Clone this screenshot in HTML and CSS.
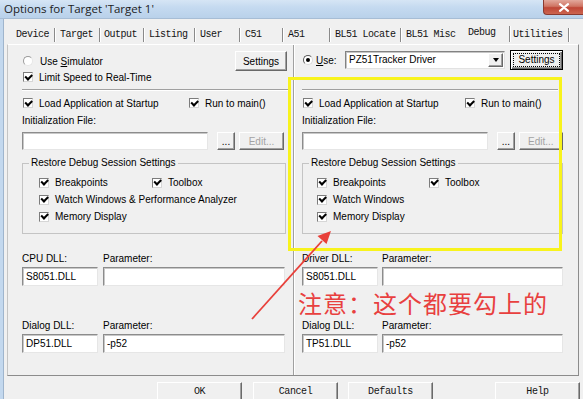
FILE: index.html
```html
<!DOCTYPE html>
<html lang="en">
<head>
<meta charset="utf-8">
<title>Options for Target 'Target 1'</title>
<link rel="stylesheet" href="styles.css">
</head>
<body>
<div class="window">
  <div class="titlebar">
    <span class="title">Options for Target 'Target 1'</span>
    <span class="close"><svg width="12" height="9" viewBox="0 0 12 9"><path d="M2 1.2 L10 7.8 M10 1.2 L2 7.8" stroke="#fff" stroke-width="2.2" stroke-linecap="round"/></svg></span>
  </div>
  <div class="frame">
    <div class="frame-edge"></div>
    <div class="client">
      <div class="tabstrip">
        <span class="tab">Device</span>
        <span class="tab">Target</span>
        <span class="tab">Output</span>
        <span class="tab">Listing</span>
        <span class="tab">User</span>
        <span class="tab">C51</span>
        <span class="tab">A51</span>
        <span class="tab">BL51 Locate</span>
        <span class="tab">BL51 Misc</span>
        <span class="tab active">Debug</span>
        <span class="tab">Utilities</span>
      </div>
      <div class="tabbody">
        <div class="col col-left">
          <div class="topsec">
            <div class="row-top">
              <span class="opt"><span class="radio"></span><span>Use <u>S</u>imulator</span></span>
              <button class="btn btn-settings">Settings</button>
            </div>
            <div class="row-check row-limit"><span class="check"></span>Limit Speed to Real-Time</div>
          </div>
          <div class="hsep"></div>
          <div class="row-check row-load">
            <span class="chk-item"><span class="check"></span>Load Application at Startup</span>
            <span class="chk-item"><span class="check"></span>Run to main()</span>
          </div>
          <div class="lbl lbl-init">Initialization File:</div>
          <div class="row-file">
            <span class="field field-init"></span>
            <button class="btn btn-dots">...</button>
            <button class="btn btn-edit">Edit...</button>
          </div>
          <fieldset class="group">
            <legend>Restore Debug Session Settings</legend>
            <div class="group-body">
              <div class="grow"><span class="chk-item"><span class="check"></span>Breakpoints</span><span class="chk-item"><span class="check"></span>Toolbox</span></div>
              <div class="grow"><span class="chk-item"><span class="check"></span>Watch Windows &amp; Performance Analyzer</span></div>
              <div class="grow"><span class="chk-item"><span class="check"></span>Memory Display</span></div>
            </div>
          </fieldset>
          <div class="dll dll-first">
            <span class="lbl">CPU DLL:</span><span class="lbl">Parameter:</span>
            <span class="field">S8051.DLL</span><span class="field"></span>
          </div>
          <div class="note-row"></div>
          <div class="dll">
            <span class="lbl">Dialog DLL:</span><span class="lbl">Parameter:</span>
            <span class="field">DP51.DLL</span><span class="field">-p52</span>
          </div>
        </div>
        <div class="vsep"></div>
        <div class="col col-right">
          <div class="topsec">
            <div class="row-top">
              <span class="radio radio-on"></span>
              <span class="use-lbl"><u>U</u>se:</span>
              <span class="combo"><span class="combo-text">PZ51Tracker Driver</span><span class="combo-btn"><span class="tri"></span></span></span>
              <button class="btn btn-settings btn-default"><span class="focus">Settings</span></button>
            </div>
          </div>
          <div class="hsep"></div>
          <div class="row-check row-load">
            <span class="chk-item"><span class="check"></span>Load Application at Startup</span>
            <span class="chk-item"><span class="check"></span>Run to main()</span>
          </div>
          <div class="lbl lbl-init">Initialization File:</div>
          <div class="row-file">
            <span class="field field-init"></span>
            <button class="btn btn-dots">...</button>
            <button class="btn btn-edit">Edit...</button>
          </div>
          <fieldset class="group">
            <legend>Restore Debug Session Settings</legend>
            <div class="group-body">
              <div class="grow"><span class="chk-item"><span class="check"></span>Breakpoints</span><span class="chk-item"><span class="check"></span>Toolbox</span></div>
              <div class="grow"><span class="chk-item"><span class="check"></span>Watch Windows</span></div>
              <div class="grow"><span class="chk-item"><span class="check"></span>Memory Display</span></div>
            </div>
          </fieldset>
          <div class="dll dll-first">
            <span class="lbl">Driver DLL:</span><span class="lbl">Parameter:</span>
            <span class="field">S8051.DLL</span><span class="field"></span>
          </div>
          <div class="note-row"><span class="note">注意：这个都要勾上的</span></div>
          <div class="dll">
            <span class="lbl">Dialog DLL:</span><span class="lbl">Parameter:</span>
            <span class="field">TP51.DLL</span><span class="field">-p52</span>
          </div>
        </div>
      </div>
      <div class="buttons">
        <span class="dbtn">OK</span>
        <span class="dbtn dbtn-cancel">Cancel</span>
        <span class="dbtn dbtn-defaults">Defaults</span>
        <span class="dbtn dbtn-help">Help</span>
      </div>
    </div>
  </div>
</div>
<div class="mark-box"></div>
<svg class="arrow" width="583" height="399" viewBox="0 0 583 399">
  <line x1="252" y1="319" x2="322" y2="241" stroke="#e8403a" stroke-width="1.8"/>
  <polygon points="331,231 326.5,244 317.5,236" fill="#e8403a"/>
</svg>
</body>
</html>
```
FILE: styles.css
```css
* { box-sizing: border-box; }
html, body { margin: 0; padding: 0; }
body {
  width: 583px; height: 399px; overflow: hidden; position: relative;
  background: #f0f0f0;
  font-family: "Liberation Sans", Arial, sans-serif; font-size: 10px; color: #000;
}
.window { display: flex; flex-direction: column; height: 399px; }

.titlebar {
  height: 19px; flex: none; display: flex; align-items: flex-start;
  background: linear-gradient(180deg, #d6e5f5 0%, #c5daf0 40%, #b9d1ea 100%);
  border-bottom: 1px solid #a7bdd5;
}
.title {
  font-family: "Open Sans", sans-serif; font-size: 11.5px; line-height: 16px;
  color: #1c1c1c; padding: 1px 0 0 4px;
}
.close {
  margin-left: auto; width: 40px; height: 15px; display: flex; align-items: center; justify-content: center;
  background: linear-gradient(180deg, #e2a89c 0%, #cf7463 45%, #bf4636 55%, #cc6550 100%);
  border: 1px solid #8a3a30; border-top: none; border-right: none; border-radius: 0 0 0 4px;
}

.frame { flex: 1; display: flex; min-height: 0; }
.frame-edge { width: 4px; flex: none; background: #c3d8ee; border-right: 1px solid #9fb5cd; }
.client { flex: 1; display: flex; flex-direction: column; min-width: 0; }

.tabstrip {
  height: 25px; flex: none; display: flex; align-items: flex-start; padding: 9px 0 0 6px;
  font-family: "Liberation Mono", monospace; font-size: 10px; letter-spacing: -0.5px; color: #141414;
}
.tab {
  height: 14px; line-height: 14px; padding-left: 5px; white-space: nowrap; flex: none;
  border-right: 1px solid #8a8a8a; box-shadow: 1px 0 0 #fff;
}
.tab:nth-child(1) { width: 45px; padding-left: 6px; }
.tab:nth-child(2) { width: 45px; }
.tab:nth-child(3) { width: 44px; padding-left: 4px; }
.tab:nth-child(4) { width: 51px; }
.tab:nth-child(5) { width: 45px; }
.tab:nth-child(6) { width: 43px; }
.tab:nth-child(7) { width: 47px; }
.tab:nth-child(8) { width: 71px; }
.tab:nth-child(9) { width: 59px; border-right: none; box-shadow: none; }
.tab:nth-child(10) { width: 50px; padding-left: 8px; }
.tab:nth-child(11) { width: 59px; padding-left: 3px; }
.tab.active { margin-top: -2px; height: 16px; }

.tabbody {
  margin-left: 3px; width: 572px; height: 332px; flex: none;
  border: 1px solid; border-color: #fff #8c8c8c #8c8c8c #c4c4c4;
  display: grid; grid-template-columns: 265px 15px 261px;
  padding: 0 15px 0 14px;
}
.vsep { margin-left: 6px; width: 2px; border-left: 1px solid #a0a0a0; border-right: 1px solid #fff; }

.col { display: flex; flex-direction: column; padding-top: 6px; min-width: 0; }
.topsec { height: 38px; flex: none; }
.row-top { height: 20px; display: flex; align-items: center; }
.col-right .row-top { margin-top: -1px; }
.opt { display: flex; align-items: center; white-space: nowrap; }
.row-check { height: 14px; display: flex; align-items: center; white-space: nowrap; flex: none; }
.row-limit { margin-top: -1px; }

.radio {
  width: 10px; height: 10px; flex: none; border-radius: 50%; background: #fff; position: relative;
  border: 1px solid; border-color: #9a9a9a #e6e6e6 #e6e6e6 #9a9a9a;
  margin: 0 7px 0 1px;
}
.radio-on { margin-right: 3px; border-color: #5a5a5a #dadada #dadada #5a5a5a; }
.radio-on::after {
  content: ""; position: absolute; left: 2px; top: 2px; width: 4px; height: 4px; border-radius: 50%; background: #000;
}
.use-lbl { width: 29px; flex: none; }

.check {
  width: 10px; height: 10px; flex: none; background: #fff; position: relative; display: inline-block;
  border: 1px solid; border-color: #7c7c7c #d6d6d6 #d6d6d6 #7c7c7c;
  margin: 0 6px 0 1px;
}
.check::after {
  content: ""; position: absolute; left: 1px; top: 0.5px; width: 5px; height: 2.5px;
  border-left: 2px solid #000; border-bottom: 2px solid #000; transform: rotate(-45deg);
}
.chk-item { display: flex; align-items: center; white-space: nowrap; }
.row-load { margin-top: 5px; }
.col-left .row-load .chk-item:first-child { width: 166px; }
.col-right .row-load .chk-item:first-child { width: 162px; }

.btn {
  background: #f0f0f0; padding: 0; margin: 0; height: 20px;
  font-family: "Liberation Sans", Arial, sans-serif; font-size: 10px; color: #000;
  border: 1px solid; border-color: #fff #696969 #696969 #fff;
  box-shadow: inset -1px -1px 0 #a0a0a0;
}
.btn-settings { width: 53px; margin-left: auto; }
.col-left .btn-settings { width: 52px; }
.btn-default {
  margin-left: 5px; border: 1px solid #000; padding: 2px;
  box-shadow: inset 1px 1px 0 #fff, inset -1px -1px 0 #696969, inset -2px -2px 0 #a0a0a0;
  display: flex;
}
.focus { flex: 1; border: 1px dotted #000; line-height: 12px; text-align: center; }

.combo {
  width: 160px; height: 18px; flex: none; display: flex; background: #fff;
  border: 1px solid; border-color: #828282 #e2e2e2 #e2e2e2 #828282;
  box-shadow: inset 1px 1px 0 #c6c6c6; padding: 1px;
}
.combo-text { flex: 1; padding-left: 2px; line-height: 14px; white-space: nowrap; }
.combo-btn {
  width: 15px; flex: none; background: #f0f0f0; display: flex; align-items: center; justify-content: center;
  border: 1px solid; border-color: #fff #696969 #696969 #fff; box-shadow: inset -1px -1px 0 #a0a0a0;
}
.tri { width: 0; height: 0; border-left: 3.5px solid transparent; border-right: 3.5px solid transparent; border-top: 4px solid #000; }

.hsep { height: 2px; flex: none; border-top: 1px solid #a0a0a0; border-bottom: 1px solid #fff; }
.col-left .hsep { margin-right: -3px; }
.col-right .hsep { margin-right: 5px; }

.lbl { line-height: 12px; height: 12px; white-space: nowrap; }
.lbl-init { margin-top: 5px; flex: none; }

.row-file { margin-top: 5px; height: 18px; display: flex; flex: none; }
.field {
  background: #fff; display: flex; align-items: center; padding-left: 3px; white-space: nowrap;
  border: 1px solid; border-color: #8c8c8c #e6e6e6 #e6e6e6 #8c8c8c;
  box-shadow: inset 1px 1px 0 #c8c8c8;
}
.field-init { width: 186px; flex: none; }
.btn-dots { width: 18px; height: 18px; margin-left: 9px; }
.btn-edit { width: 45px; height: 18px; margin-left: 4px; color: #a3a3a3; }

.group {
  margin: 7px 0 0; padding: 0; min-inline-size: 0; flex: none;
  border: 1px solid #c4c4c4;
}
.col-left .group { margin-right: 1px; }
.group legend { margin-left: 6px; padding: 0 2px; line-height: 12px; font-size: 10px; }
.group-body { padding: 5px 0 8px 15px; }
.col-right .group-body { padding-left: 13px; }
.grow { height: 17px; display: flex; align-items: center; }
.col-left .grow .chk-item:first-child { width: 113px; }
.col-right .grow .chk-item:first-child { width: 112px; }
.grow .check { margin-right: 6px; }

.dll {
  display: grid; grid-template-columns: 76px 1fr; column-gap: 5px; row-gap: 2px; flex: none;
}
.col-left .dll { margin-right: 2px; column-gap: 5px; }
.col-right .dll { column-gap: 4px; }
.dll .field { height: 19px; }
.dll-first { margin-top: 19px; }
.note-row { height: 34px; flex: none; }
.note {
  display: block; margin-left: -4px; white-space: nowrap;
  font-family: "Noto Sans CJK SC", sans-serif; font-size: 24px; line-height: 34px;
  letter-spacing: 1px; color: #e8403f;
}

.buttons { display: flex; padding: 6px 3px 0 153px; flex: none; }
.dbtn {
  width: 85px; height: 24px; flex: none; text-align: center; padding-top: 2px; line-height: 14px;
  font-family: "Liberation Mono", monospace; font-size: 10px; letter-spacing: -0.4px; color: #141414;
  background: #f0f0f0; border: 1px solid; border-color: #fff #6a6a6a #6a6a6a #fff;
  box-shadow: inset -1px -1px 0 #a0a0a0;
}
.dbtn-cancel { margin-left: 11px; }
.dbtn-defaults { margin-left: 10px; }
.dbtn-help { margin-left: auto; }

.mark-box {
  position: absolute; left: 288px; top: 77px; width: 274px; height: 174px;
  border: 3px solid #f8f31c;
}
.arrow { position: absolute; left: 0; top: 0; pointer-events: none; }
```
